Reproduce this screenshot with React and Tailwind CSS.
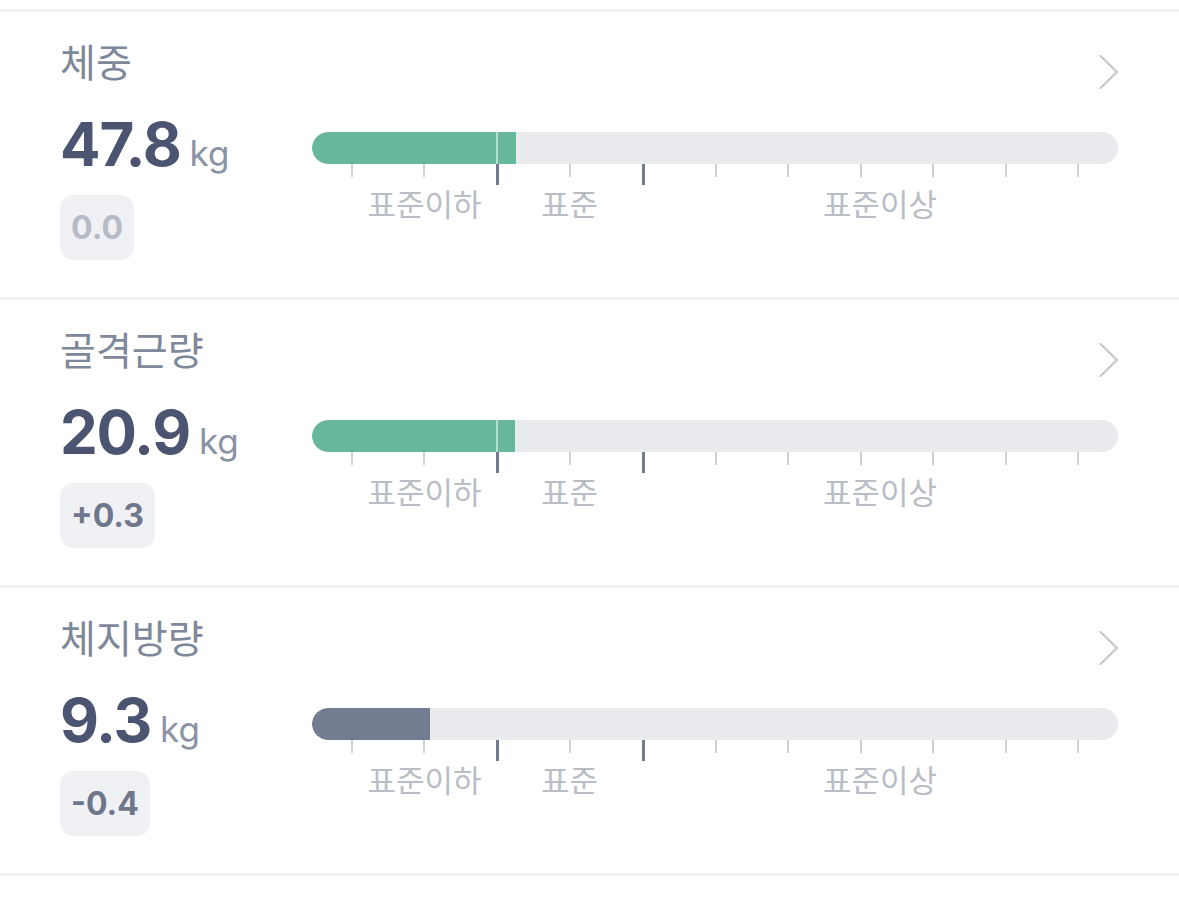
import React from "react";

const rows = [
  { title: "체중", value: "47.8", delta: "0.0", deltaTone: "zero", fill: 204, fillColor: "bg-[#67b89a]" },
  { title: "골격근량", value: "20.9", delta: "+0.3", deltaTone: "pos", fill: 203, fillColor: "bg-[#67b89a]" },
  { title: "체지방량", value: "9.3", delta: "-0.4", deltaTone: "neg", fill: 118, fillColor: "bg-[#737d91]" },
];

const KR = { fontFamily: '"Noto Sans CJK KR", "Noto Sans", sans-serif' };
const NUM = { fontFamily: 'Inter, "Noto Sans CJK KR", sans-serif' };

const TICKS = [0, 1, 2, 3, 4, 5, 6, 7, 8, 9, 10];
const MAJOR = new Set([2, 4]);
const MARKER = 185;

function Chevron() {
  return (
    <svg width="22" height="36" viewBox="0 0 22 36" fill="none" className="self-end -mr-[2px]">
      <path d="M2.5 2 L19 18 L2.5 34" stroke="#c4c7cd" strokeWidth="2.2" strokeLinecap="round" strokeLinejoin="round" />
    </svg>
  );
}

function Scale({ fill, fillColor }) {
  return (
    <div className="flex flex-col">
      <div className="relative h-[32px] rounded-full bg-[#e9eaee] overflow-hidden">
        <div className={`absolute left-0 top-0 h-full rounded-l-full ${fillColor}`} style={{ width: fill }} />
        {fill > MARKER && (
          <div className="absolute top-0 h-full w-[2px] bg-[#b4dfcb]" style={{ left: MARKER - 1 }} />
        )}
      </div>
      <div className="flex justify-between px-[39px] h-[21px] items-start">
        {TICKS.map((i) => (
          <div
            key={i}
            className={MAJOR.has(i) ? "w-[3px] h-[21px] bg-[#737c8f]" : "w-[2px] h-[13px] bg-[#cdd0d6]"}
          />
        ))}
      </div>
      <div className="flex pl-[40px] mt-[2px] text-[31px] leading-none text-[#b9bdc6]" style={KR}>
        <div className="w-[145px] text-center">표준이하</div>
        <div className="w-[145px] text-center">표준</div>
        <div className="flex-1 text-center">표준이상</div>
      </div>
    </div>
  );
}

function Row({ title, value, delta, deltaTone, fill, fillColor }) {
  const deltaColor = deltaTone === "zero" ? "text-[#b6bbc4]" : "text-[#6e778b]";
  return (
    <div className="h-[288px] border-t-[3px] border-[#f0f1f3] flex pl-[60px] pr-[61px]">
      <div className="w-[252px] flex flex-col items-start pt-[29px]">
        <div className="text-[39px] leading-none text-[#7f889b]" style={KR}>{title}</div>
        <div className="mt-[34px] flex items-baseline">
          <span className="text-[60px] leading-none font-bold tracking-[-1.2px] text-[#4b5571]" style={NUM}>{value}</span>
          <span className="ml-[9px] text-[35px] leading-none text-[#8a92a4]" style={NUM}>kg</span>
        </div>
        <div className={`mt-[21px] h-[65px] px-[11px] rounded-[13px] bg-[#eff1f5] flex items-center text-[32px] font-bold ${deltaColor}`} style={NUM}>
          {delta}
        </div>
      </div>
      <div className="flex-1 flex flex-col pt-[42px]">
        <Chevron />
        <div className="mt-[42px]">
          <Scale fill={fill} fillColor={fillColor} />
        </div>
      </div>
    </div>
  );
}

export default function App() {
  return (
    <div className="w-[1179px] h-[917px] bg-white pt-[9px] overflow-hidden">
      {rows.map((r, i) => (
        <Row key={i} {...r} />
      ))}
      <div className="border-t-[3px] border-[#f0f1f3]" />
    </div>
  );
}
